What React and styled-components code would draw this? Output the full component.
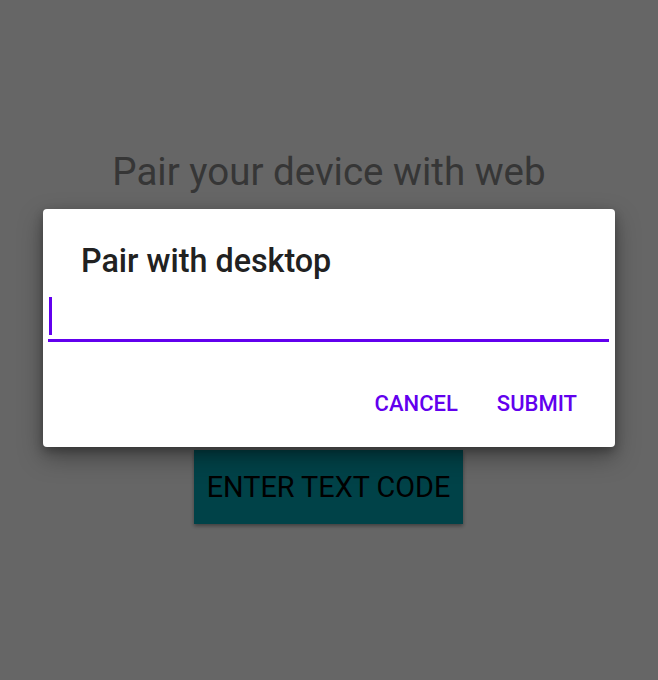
import styled, { createGlobalStyle } from 'styled-components'

const GlobalStyle = createGlobalStyle`
  html, body {
    margin: 0;
    padding: 0;
    background: #ffffff;
    font-family: Roboto, "Liberation Sans", sans-serif;
  }
`

const Screen = styled.div`
  position: relative;
  width: 658px;
  height: 680px;
  overflow: hidden;
  background: #ffffff;
`

const Content = styled.div`
  display: flex;
  flex-direction: column;
  align-items: center;
  padding-top: 150px;
`

const PageTitle = styled.h1`
  margin: 0;
  font-size: 38.5px;
  font-weight: 400;
  line-height: 44px;
  color: #888888;
`

const CodeButton = styled.button`
  margin-top: 256px;
  margin-right: 1px;
  width: 269px;
  height: 74px;
  border: none;
  border-radius: 0;
  background: #00a5b4;
  color: #000000;
  font-family: Roboto, "Liberation Sans", sans-serif;
  font-size: 28.8px;
  font-weight: 400;
  padding: 0;
  box-shadow: 0 2px 4px rgba(0, 0, 0, 0.4);
`

const Scrim = styled.div`
  position: absolute;
  inset: 0;
  background: rgba(0, 0, 0, 0.6);
`

const Dialog = styled.div`
  position: absolute;
  left: 43px;
  top: 209px;
  width: 572px;
  height: 238px;
  box-sizing: border-box;
  background: #ffffff;
  border-radius: 4px;
  box-shadow: 0 10px 24px rgba(0, 0, 0, 0.35), 0 4px 10px rgba(0, 0, 0, 0.25);
  display: flex;
  flex-direction: column;
  padding: 32px 6px 0 5px;
`

const DialogTitle = styled.h2`
  margin: 0 0 0 33px;
  font-size: 32.3px;
  font-weight: 500;
  line-height: 40px;
  color: #212121;
`

const Field = styled.div`
  margin-top: 18px;
  height: 43px;
  box-sizing: border-box;
  border-bottom: 3px solid #6200ee;
  display: flex;
  align-items: flex-start;
`

const Caret = styled.span`
  display: block;
  width: 3px;
  height: 38px;
  margin-left: 1px;
  margin-top: -2px;
  background: #6200ee;
`

const Actions = styled.div`
  display: flex;
  justify-content: flex-end;
  gap: 39px;
  padding-right: 32px;
  margin-top: 49px;
`

const TextButton = styled.span`
  font-size: 22px;
  font-weight: 500;
  line-height: 26px;
  color: #6200ee;
`

export default function App() {
  return (
    <>
      <GlobalStyle />
      <Screen>
        <Content>
          <PageTitle>Pair your device with web</PageTitle>
          <CodeButton>ENTER TEXT CODE</CodeButton>
        </Content>
        <Scrim />
        <Dialog>
          <DialogTitle>Pair with desktop</DialogTitle>
          <Field>
            <Caret />
          </Field>
          <Actions>
            <TextButton>CANCEL</TextButton>
            <TextButton>SUBMIT</TextButton>
          </Actions>
        </Dialog>
      </Screen>
    </>
  )
}
